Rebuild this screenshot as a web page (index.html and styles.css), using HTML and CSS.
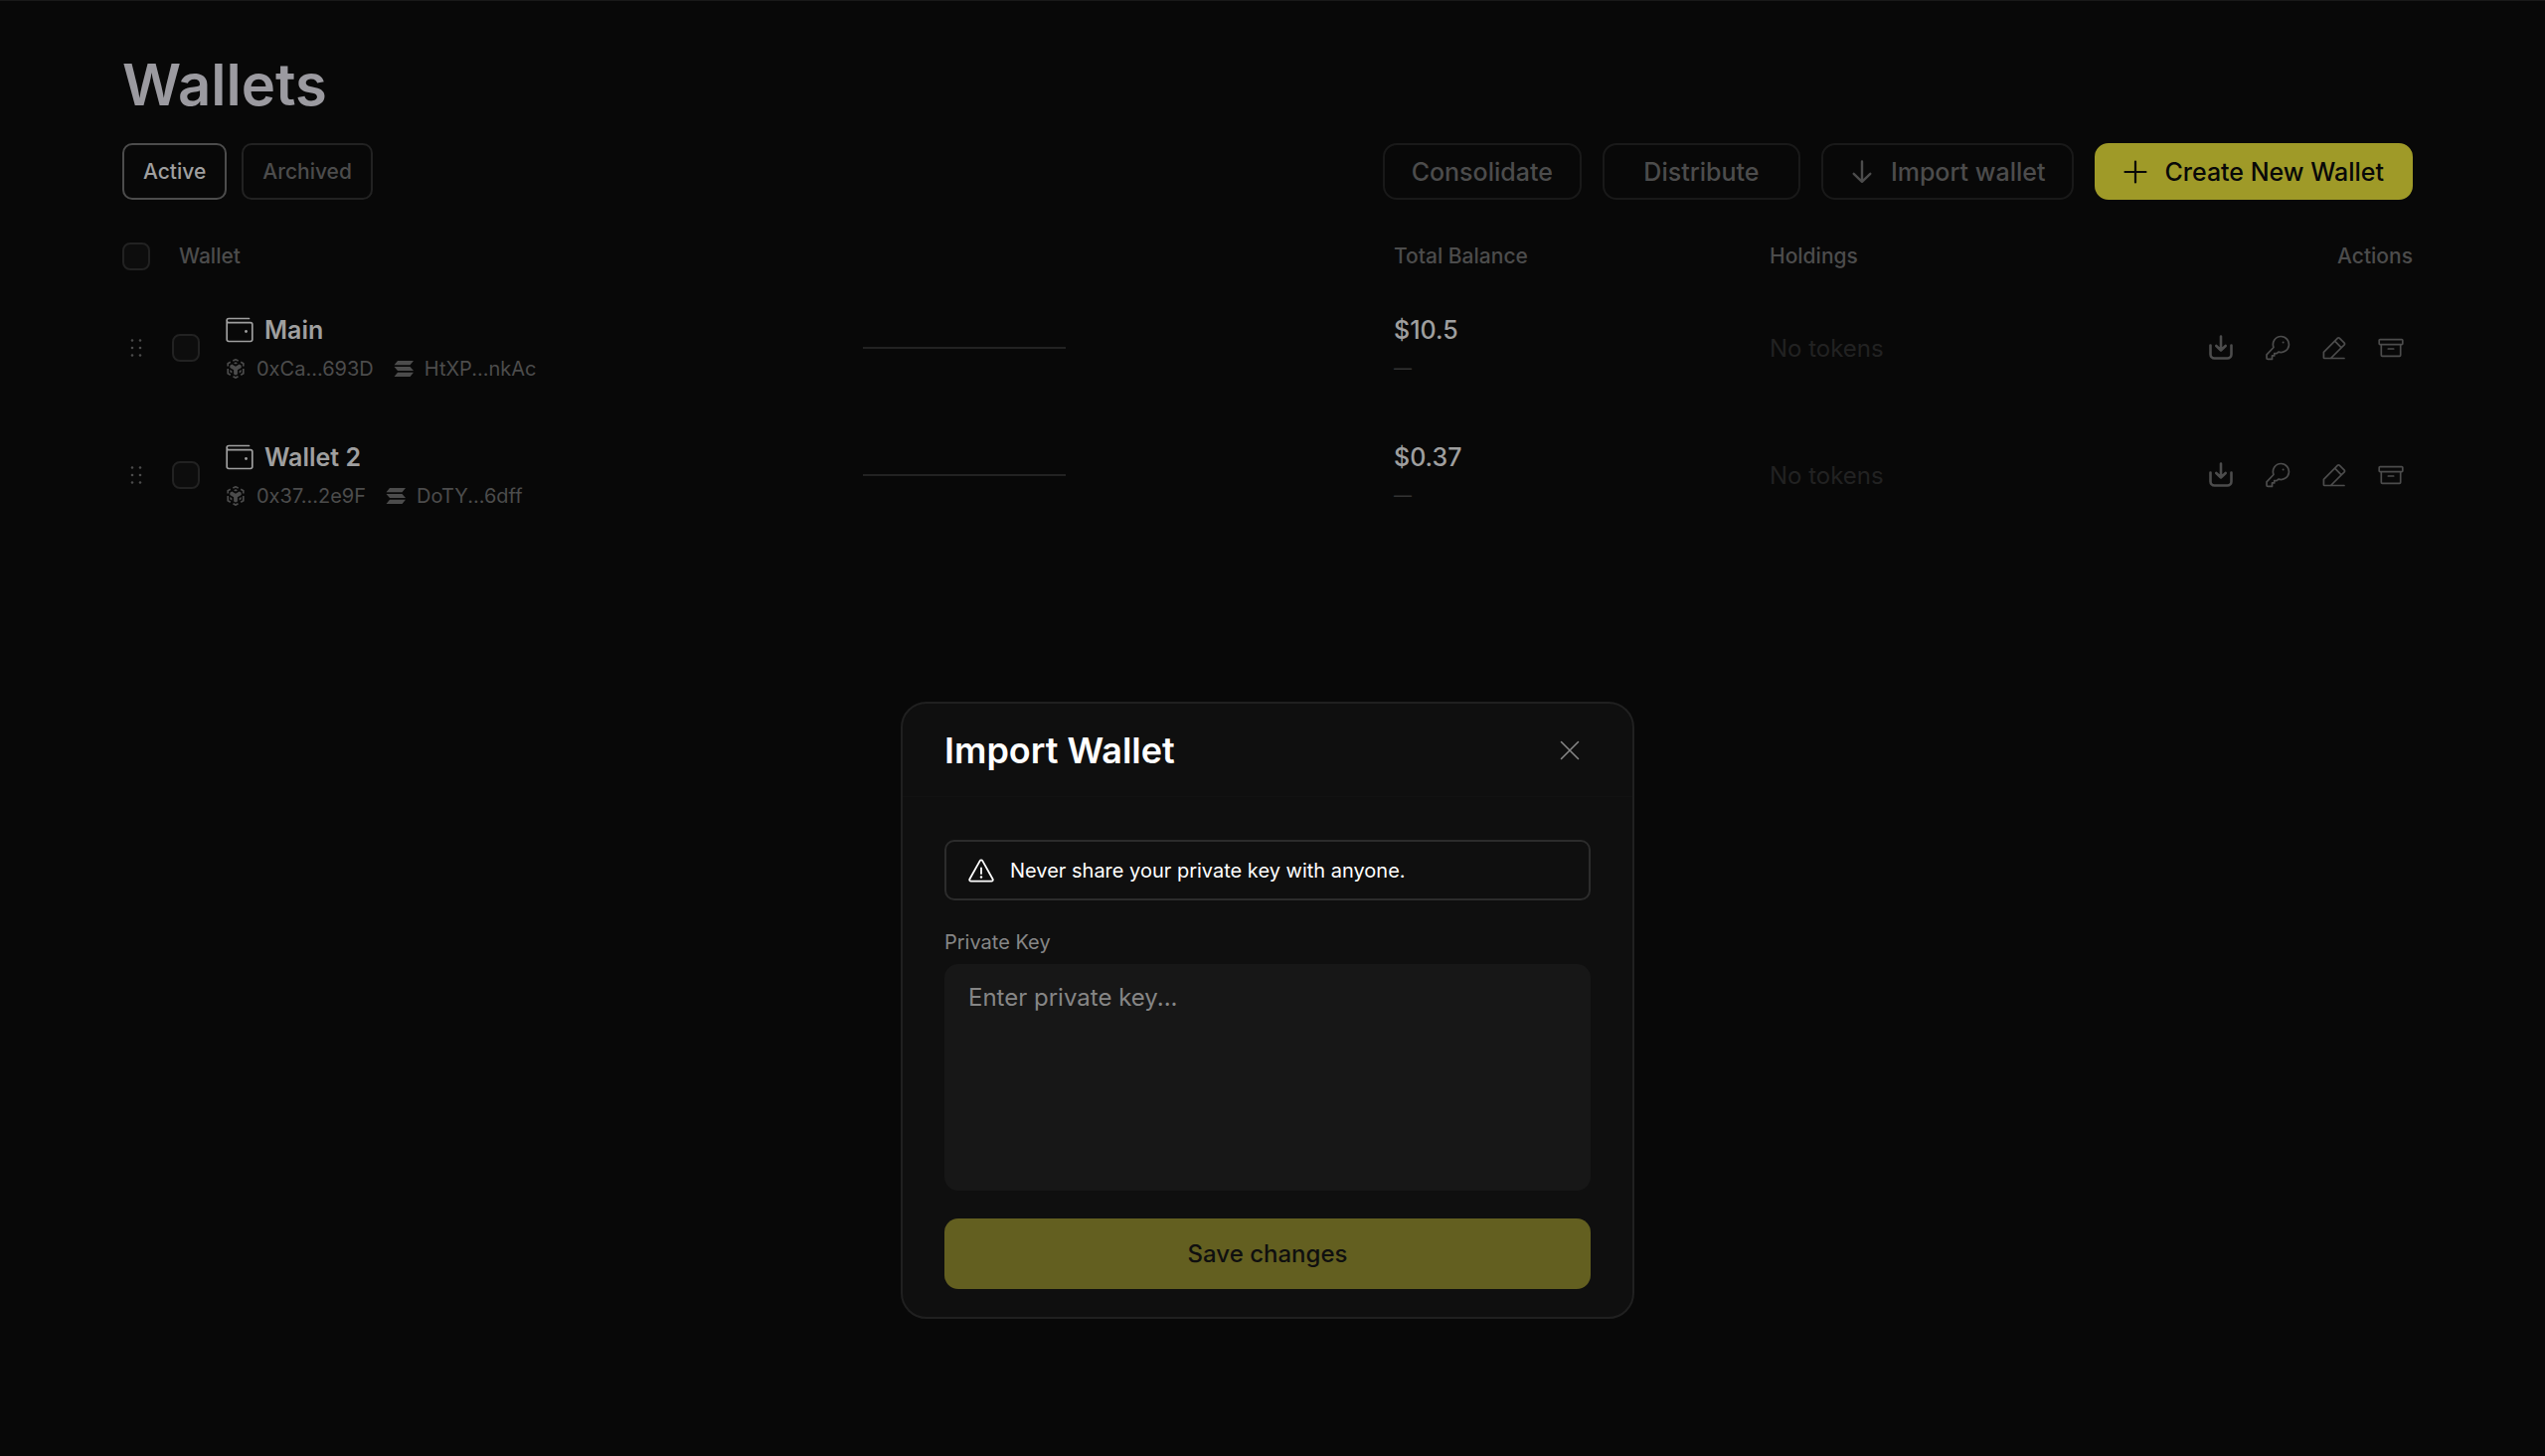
FILE: index.html
```html
<!DOCTYPE html>
<html lang="en">
<head>
	<meta charset="utf-8">
	<title>Wallets</title>
	<meta name="viewport" content="width=device-width, initial-scale=1">
	<link rel="stylesheet" href="styles.css">
</head>
<body>
	<!-- shared icons -->
	<svg class="sprite" aria-hidden="true">
		<symbol id="i-wallet" viewBox="0 0 28 26">
			<path d="M23.500 1.500H3.200a2 2 0 0 0 0 4.200H25a1.800 1.800 0 0 1 1.800 1.800v15.200a1.800 1.800 0 0 1-1.800 1.800H3a1.800 1.800 0 0 1-1.800-1.800V3.500" fill="none" stroke="currentColor" stroke-width="1.700" stroke-linecap="round"/>
			<circle cx="20.500" cy="14.500" r="1.400" fill="currentColor"/>
		</symbol>
		<symbol id="i-bnb" viewBox="0 0 20 20">
			<path d="M7.300 2 10 .8 12.700 2M4.800 3.300 2.200 4.800v2.700M15.200 3.300l2.600 1.500v2.700M2.200 10v4.700l2.600 1.500M17.800 10v4.700l-2.600 1.500M7.500 17.700l2.500 1.400 2.500-1.400" fill="none" stroke="currentColor" stroke-width="1.700"/>
			<path d="M8 4.300l2-1.100 2 1.100-2 1.200zM4.300 6.700l2-1.100L10 7.700l3.700-2.100 2 1.100v2.400l-3.800 2.200v4.200L10 16.600l-1.900-1.100v-4.200L4.300 9.100zM4.300 11l2.100 1.200v2.300l-2.100-1.200zM15.700 11v2.300l-2.100 1.200v-2.300z" fill="currentColor"/>
		</symbol>
		<symbol id="i-sol" viewBox="0 0 20 16">
			<path d="M4 0h16l-3.500 4.200H.5zM.5 5.900h16L20 10.100H4zM4 11.800h16L16.500 16H.5z" fill="currentColor"/>
		</symbol>
		<symbol id="i-drag" viewBox="0 0 12 20">
			<g fill="currentColor"><circle cx="2" cy="2.500" r="1.300"/><circle cx="10" cy="2.500" r="1.300"/><circle cx="2" cy="10" r="1.300"/><circle cx="10" cy="10" r="1.300"/><circle cx="2" cy="17.500" r="1.300"/><circle cx="10" cy="17.500" r="1.300"/></g>
		</symbol>
		<symbol id="i-download" viewBox="0 0 26 26">
			<path d="M2.500 10.500v9a4 4 0 0 0 4 4h13a4 4 0 0 0 4-4v-9M13 1.500v13.500M8.300 11l4.700 4.500 4.700-4.500" fill="none" stroke="currentColor" stroke-width="2.600" stroke-linecap="round" stroke-linejoin="round"/>
		</symbol>
		<symbol id="i-key" viewBox="0 0 26 26">
			<path d="M16.500 1.500a8 8 0 1 1-2.600 15.600l-1.800 1.600H9.700v2.200H7.500v3.500H3.200a1.200 1.200 0 0 1-1.200-1.200v-3.400l7-7.300A8 8 0 0 1 16.500 1.500z" fill="none" stroke="currentColor" stroke-width="1.700" stroke-linejoin="round"/>
			<circle cx="18.600" cy="7.600" r="1" fill="currentColor"/>
		</symbol>
		<symbol id="i-edit" viewBox="0 0 26 26">
			<path d="M23 23.500H3.200a.8.800 0 0 1-.8-.8v-5.400L16.500 3.200a1.200 1.200 0 0 1 1.700 0l5 5a1.200 1.200 0 0 1 0 1.700L9.500 23.500M13.600 6.200l6.600 6.600" fill="none" stroke="currentColor" stroke-width="1.700" stroke-linecap="round" stroke-linejoin="round"/>
		</symbol>
		<symbol id="i-archive" viewBox="0 0 26 26">
			<path d="M2.100 4.700h21.800a.9.900 0 0 1 .9.900v3.200a.9.900 0 0 1-.9.900H2.100a.9.900 0 0 1-.9-.9V5.600a.9.900 0 0 1 .9-.9zM3.300 9.700v10.600a1 1 0 0 0 1 1h17.400a1 1 0 0 0 1-1V9.700M10.300 14h5.400" fill="none" stroke="currentColor" stroke-width="1.700" stroke-linecap="round" stroke-linejoin="round"/>
		</symbol>
		<symbol id="i-arrow" viewBox="0 0 24 24">
			<path d="M12 1.500v20M3.700 13.800l8.300 8 8.300-8" fill="none" stroke="currentColor" stroke-width="2.400" stroke-linecap="round" stroke-linejoin="round"/>
		</symbol>
		<symbol id="i-plus" viewBox="0 0 24 24">
			<path d="M12 1.500v21M1.500 12h21" fill="none" stroke="currentColor" stroke-width="2.200" stroke-linecap="round"/>
		</symbol>
		<symbol id="i-close" viewBox="0 0 20 20">
			<path d="m1.500 1.500 17 17m0-17-17 17" fill="none" stroke="currentColor" stroke-width="1.600" stroke-linecap="round"/>
		</symbol>
		<symbol id="i-warning" viewBox="0 0 26 24">
			<path d="M11.700 2.100a1.500 1.500 0 0 1 2.600 0l10.300 18.400a1.500 1.500 0 0 1-1.300 2.200H2.700a1.500 1.500 0 0 1-1.300-2.200z" fill="none" stroke="currentColor" stroke-width="1.800" stroke-linejoin="round"/>
			<path d="M13 9.500v5.500" stroke="currentColor" stroke-width="1.800" stroke-linecap="round"/>
			<circle cx="13" cy="18.500" r="1.200" fill="currentColor"/>
		</symbol>
	</svg>

	<main class="page">
		<h1 class="page-title">Wallets</h1>

		<div class="toolbar">
			<div class="tabs">
				<button type="button" class="tab tab-active">Active</button>
				<button type="button" class="tab">Archived</button>
			</div>
			<div class="toolbar-actions">
				<button type="button" class="btn">Consolidate</button>
				<button type="button" class="btn">Distribute</button>
				<button type="button" class="btn"><svg><use href="#i-arrow"/></svg>Import wallet</button>
				<button type="button" class="btn btn-primary"><svg><use href="#i-plus"/></svg>Create New Wallet</button>
			</div>
		</div>

		<table class="wallets">
			<colgroup>
				<col class="col-wallet">
				<col class="col-chart">
				<col class="col-balance">
				<col class="col-holdings">
				<col class="col-actions">
			</colgroup>
			<thead>
				<tr>
					<th scope="col">
						<div class="head-wallet"><input type="checkbox" class="check" aria-label="Select all wallets">Wallet</div>
					</th>
					<td></td>
					<th scope="col">Total Balance</th>
					<th scope="col">Holdings</th>
					<th scope="col" class="right">Actions</th>
				</tr>
			</thead>
			<tbody>
				<tr>
					<td>
						<div class="wallet">
							<svg class="ico-drag"><use href="#i-drag"/></svg>
							<input type="checkbox" class="check" aria-label="Select Main">
							<div class="wallet-info">
								<div class="wallet-name"><svg class="ico-wallet"><use href="#i-wallet"/></svg>Main</div>
								<div class="wallet-keys">
									<span class="key"><svg class="ico-chain"><use href="#i-bnb"/></svg>0xCa...693D</span>
									<span class="key"><svg class="ico-chain"><use href="#i-sol"/></svg>HtXP...nkAc</span>
								</div>
							</div>
						</div>
					</td>
					<td><div class="chart"></div></td>
					<td><div class="balance">$10.5</div><div class="change">—</div></td>
					<td class="holdings">No tokens</td>
					<td>
						<div class="actions">
							<button type="button" class="icon-btn" aria-label="Deposit"><svg><use href="#i-download"/></svg></button>
							<button type="button" class="icon-btn" aria-label="Export key"><svg><use href="#i-key"/></svg></button>
							<button type="button" class="icon-btn" aria-label="Rename"><svg><use href="#i-edit"/></svg></button>
							<button type="button" class="icon-btn" aria-label="Archive"><svg><use href="#i-archive"/></svg></button>
						</div>
					</td>
				</tr>
				<tr>
					<td>
						<div class="wallet">
							<svg class="ico-drag"><use href="#i-drag"/></svg>
							<input type="checkbox" class="check" aria-label="Select Wallet 2">
							<div class="wallet-info">
								<div class="wallet-name"><svg class="ico-wallet"><use href="#i-wallet"/></svg>Wallet 2</div>
								<div class="wallet-keys">
									<span class="key"><svg class="ico-chain"><use href="#i-bnb"/></svg>0x37...2e9F</span>
									<span class="key"><svg class="ico-chain"><use href="#i-sol"/></svg>DoTY...6dff</span>
								</div>
							</div>
						</div>
					</td>
					<td><div class="chart"></div></td>
					<td><div class="balance">$0.37</div><div class="change">—</div></td>
					<td class="holdings">No tokens</td>
					<td>
						<div class="actions">
							<button type="button" class="icon-btn" aria-label="Deposit"><svg><use href="#i-download"/></svg></button>
							<button type="button" class="icon-btn" aria-label="Export key"><svg><use href="#i-key"/></svg></button>
							<button type="button" class="icon-btn" aria-label="Rename"><svg><use href="#i-edit"/></svg></button>
							<button type="button" class="icon-btn" aria-label="Archive"><svg><use href="#i-archive"/></svg></button>
						</div>
					</td>
				</tr>
			</tbody>
		</table>
	</main>

	<div class="overlay">
		<form class="modal" role="dialog" aria-labelledby="modal-title">
			<header class="modal-head">
				<h2 id="modal-title" class="modal-title">Import Wallet</h2>
				<button type="button" class="modal-close" aria-label="Close"><svg><use href="#i-close"/></svg></button>
			</header>
			<div class="modal-body">
				<p class="alert"><svg class="ico-warning"><use href="#i-warning"/></svg>Never share your private key with anyone.</p>
				<label class="label" for="private-key">Private Key</label>
				<textarea id="private-key" class="textarea" placeholder="Enter private key..."></textarea>
				<button type="submit" class="save">Save changes</button>
			</div>
		</form>
	</div>
</body>
</html>
```
FILE: styles.css
```css
* {
	box-sizing: border-box;
}
body {
	margin: 0;
	min-height: 100vh;
	background: #080808;
	border-top: 1px solid #191919;
	color: #9f9f9f;
	font-family: Inter, "Liberation Sans", sans-serif;
	font-size: 20px;
}
button, input, textarea {
	margin: 0;
	font-family: inherit;
}
svg {
	display: block;
	flex: none;
}
.sprite {
	position: absolute;
	width: 0;
	height: 0;
}

/* page */
.page {
	padding: 48px 133px 0 123px;
}
.page-title {
	margin: 0;
	font-size: 58px;
	line-height: 72px;
	font-weight: 600;
	color: #9b9aa0;
}
.toolbar {
	display: flex;
	justify-content: space-between;
	margin-top: 23px;
}
.tabs {
	display: flex;
	gap: 15px;
}
.toolbar-actions {
	display: flex;
	gap: 21px;
}
.tab {
	height: 57px;
	padding: 0 19px;
	border: 2px solid #222;
	border-radius: 10px;
	background: none;
	color: #4c4c4c;
	font-size: 21px;
	font-weight: 500;
}
.tab-active {
	border-color: #4c4c4c;
	color: #9f9f9f;
}
.btn {
	display: flex;
	align-items: center;
	justify-content: center;
	gap: 17px;
	min-width: 199px;
	height: 57px;
	padding: 0 27px;
	border: 2px solid #191919;
	border-radius: 14px;
	background: none;
	color: #4c4c4c;
	font-size: 25px;
	font-weight: 500;
}
.btn svg {
	width: 24px;
	height: 24px;
}
.btn-primary {
	border-color: #9f9a28;
	background: #9f9a28;
	color: #080808;
}

/* table */
.wallets {
	width: 100%;
	margin-top: 28px;
	border-collapse: collapse;
	table-layout: fixed;
}
.wallets th,
.wallets td {
	padding: 0;
	text-align: left;
}
.wallets th {
	height: 57px;
	color: #4c4c4c;
	font-weight: 500;
	font-size: 21px;
}
.wallets .right {
	text-align: right;
}
.wallets tbody td {
	height: 128px;
}
.col-wallet {
	width: 745px;
}
.col-chart {
	width: 534px;
}
.col-balance,
.col-holdings {
	width: 378px;
}
.head-wallet {
	display: flex;
	align-items: center;
	gap: 29px;
}
.check {
	appearance: none;
	flex: none;
	width: 28px;
	height: 28px;
	border: 2px solid #222;
	border-radius: 8px;
	background: #0d0d0d;
}
.wallet {
	display: flex;
	align-items: center;
	padding-left: 8px;
}
.wallet .check {
	margin: 0 26px 0 30px;
}
.wallet-name {
	display: flex;
	align-items: center;
	gap: 11px;
	font-size: 25px;
	line-height: 36px;
	font-weight: 600;
}
.wallet-keys {
	display: flex;
	gap: 20px;
	margin-top: 5px;
	color: #4c4c4c;
	line-height: 32px;
}
.key {
	display: flex;
	align-items: center;
	gap: 11px;
}
.ico-drag {
	width: 12px;
	height: 20px;
	color: #4c4c4c;
}
.ico-wallet {
	width: 28px;
	height: 26px;
}
.ico-chain {
	width: 20px;
	height: 20px;
}
.chart {
	width: 204px;
	height: 2px;
	background: #222;
}
.balance {
	font-size: 25px;
	line-height: 36px;
	font-weight: 500;
}
.change {
	margin-top: 5px;
	color: #333;
	font-size: 18px;
	line-height: 32px;
}
.holdings {
	color: #222;
	font-size: 24px;
}
.actions {
	display: flex;
	justify-content: flex-end;
	gap: 13px;
}
.icon-btn {
	padding: 9px;
	border: 0;
	background: none;
	color: #4c4c4c;
}
.icon-btn svg {
	width: 26px;
	height: 26px;
}

/* modal */
.overlay {
	position: fixed;
	inset: 0 10px 0 0;
	display: flex;
	align-items: flex-end;
	justify-content: center;
	padding-bottom: 138px;
}
.modal {
	width: 738px;
	border: 2px solid #202020;
	border-radius: 26px;
	background: #0f0f0f;
}
.modal-head {
	display: flex;
	align-items: center;
	justify-content: space-between;
	height: 94px;
	padding: 0 53px 0 42px;
	border-bottom: 1px solid #121212;
}
.modal-title {
	margin: 0;
	color: #fff;
	font-size: 36px;
	font-weight: 600;
}
.modal-close {
	padding: 0;
	border: 0;
	background: none;
	color: #868686;
}
.modal-close svg {
	width: 20px;
	height: 20px;
}
.modal-body {
	padding: 43px 42px 28px;
}
.alert {
	display: flex;
	align-items: center;
	gap: 16px;
	height: 61px;
	margin: 0;
	padding: 0 22px;
	border: 2px solid #2c2c2c;
	border-radius: 10px;
	color: #fff;
}
.ico-warning {
	width: 26px;
	height: 24px;
}
.label {
	display: block;
	margin-top: 24px;
	color: #868686;
	line-height: 36px;
}
.textarea {
	display: block;
	width: 100%;
	height: 228px;
	margin-top: 4px;
	padding: 16px 24px;
	border: 0;
	border-radius: 14px;
	outline: 0;
	background: #171717;
	color: #fff;
	font-size: 24px;
	line-height: 36px;
	resize: none;
}
.textarea::placeholder {
	color: #868686;
}
.save {
	display: block;
	width: 100%;
	height: 71px;
	margin-top: 28px;
	border: 0;
	border-radius: 14px;
	background: #635f20;
	color: #0f0f0f;
	font-size: 24px;
	font-weight: 500;
}
```
